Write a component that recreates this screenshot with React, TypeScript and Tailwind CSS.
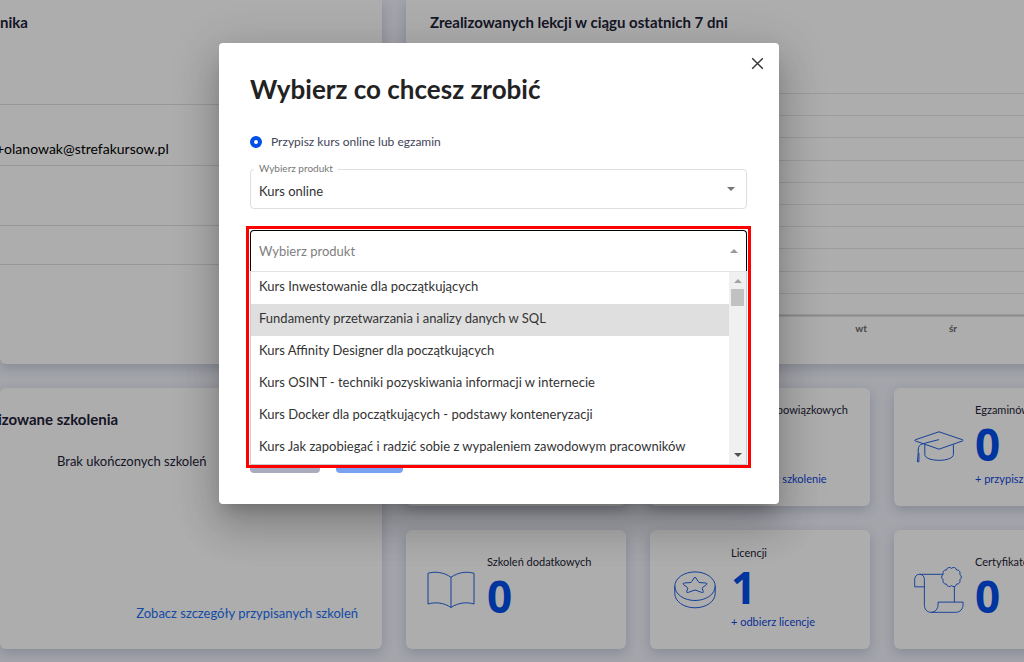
import { useState } from "react";
import type { ReactNode } from "react";

const courses = [
  "Kurs Inwestowanie dla początkujących",
  "Fundamenty przetwarzania i analizy danych w SQL",
  "Kurs Affinity Designer dla początkujących",
  "Kurs OSINT - techniki pozyskiwania informacji w internecie",
  "Kurs Docker dla początkujących - podstawy konteneryzacji",
  "Kurs Jak zapobiegać i radzić sobie z wypaleniem zawodowym pracowników",
];

const weekDays = ["pt", "sb", "nd", "pn", "wt", "śr", "cz"];

// outline of the certificate seal, ten small bumps on a circle
const sealPath =
  Array.from({ length: 11 }, (_, i) => {
    const angle = (i * Math.PI) / 5 - Math.PI / 10;
    const x = (39 + 9 * Math.cos(angle)).toFixed(2);
    const y = (10.5 + 9 * Math.sin(angle)).toFixed(2);
    return i === 0 ? `M${x} ${y}` : `A3.1 3.1 0 0 1 ${x} ${y}`;
  }).join(" ") + "Z";

function BookIcon() {
  return (
    <svg width="48" height="38" viewBox="0 0 48 38" fill="none" stroke="#1f5fe0" strokeLinejoin="round">
      <path d="M1 2.3C8 .2 17 1.2 24 6.3 31 1.2 40 .2 47 2.3V33C40 30.8 31 31.6 24 36.5 17 31.6 8 30.8 1 33Z" />
      <path d="M24 6.3V36.5" />
    </svg>
  );
}

function CoinIcon() {
  return (
    <svg width="42" height="38" viewBox="0 0 42 38" fill="none" stroke="#1f5fe0" strokeLinejoin="round">
      <ellipse cx="21" cy="15.2" rx="20.2" ry="14.3" />
      <path d="M.8 15.2V22.5C.8 30.4 9.8 36.8 21 36.8S41.2 30.4 41.2 22.5V15.2" />
      <path d="M20 7Q21 5.4 22 7L24.2 10.6Q24.8 11.5 26 11.6L31.6 12Q34 12.3 32.3 13.8L28.7 16.4Q27.9 17 28.3 18L29.3 20.3Q29.7 22 27.7 21.4L22 19.3Q21 18.9 20 19.3L14.3 21.4Q12.3 22 12.7 20.3L13.7 18Q14.1 17 13.3 16.4L9.7 13.8Q8 12.3 10.4 12L16 11.6Q17.2 11.5 17.8 10.6Z" />
    </svg>
  );
}

function CapIcon() {
  return (
    <svg width="50" height="32" viewBox="0 0 50 32" fill="none" stroke="#1f5fe0" strokeLinejoin="round">
      <path d="M25 .8 48.6 8.8Q49.8 9.3 48.6 9.9L25 18.2 1.2 9.9Q.2 9.3 1.2 8.8Z" />
      <path d="M10.8 13.5V23.5C10.8 27 17 29.3 25 29.3S39.4 27 39.4 23.5V13.5" />
      <path d="M25 8.6 9 12.7C5.5 13.6 4.2 15.5 4.2 19V22L3.4 30.8H4.9V22" />
    </svg>
  );
}

function CertificateIcon() {
  return (
    <svg width="52" height="48" viewBox="0 0 52 48" fill="none" stroke="#1f5fe0" strokeLinejoin="round">
      <path d="M30 7.7H5.7C2.6 7.7.7 10 .7 13V20.7H10.8" />
      <path d="M5.7 7.7C9 7.7 10.8 10 10.8 13V39.5C10.8 44 13.5 47.2 17.8 47.2H43.5C48 47.2 51 43.5 51 39.5V36.6H25V39.5C25 43.8 22 47.2 17.8 47.2" />
      <path d="M42 20V36.6" />
      <path d={sealPath} />
    </svg>
  );
}

type StatProps = { label: string; value: number; link?: string; icon?: ReactNode };

const stats: StatProps[] = [
  { label: "Szkoleń", value: 0, icon: <BookIcon /> },
  { label: "Szkoleń obowiązkowych", value: 0, link: "+ przypisz szkolenie", icon: <BookIcon /> },
  { label: "Egzaminów", value: 0, link: "+ przypisz egzamin", icon: <CapIcon /> },
  { label: "Szkoleń dodatkowych", value: 0, icon: <BookIcon /> },
  { label: "Licencji", value: 1, link: "+ odbierz licencje", icon: <CoinIcon /> },
  { label: "Certyfikatów", value: 0, icon: <CertificateIcon /> },
];

function StatCard({ label, value, link, icon }: StatProps) {
  return (
    <article className="flex items-center gap-[11px] rounded-md bg-white pl-5 shadow-[0_4px_12px_rgba(40,50,90,0.2)] whitespace-nowrap">
      <div className="flex w-[50px] shrink-0 justify-center">{icon}</div>
      <div className={link ? "pb-1" : "pb-2.5"}>
        <p className="text-[11px] leading-[22px] text-[#1e2337]">{label}</p>
        <p className="font-['Open_Sans',sans-serif] text-[44px] leading-[46px] font-bold text-[#004eeb]">{value}</p>
        {link && (
          <a href="#" className="block text-[11px] leading-6 text-[#0f46e0]">
            {link}
          </a>
        )}
      </div>
    </article>
  );
}

function LessonsChart() {
  return (
    <section className="flex flex-col rounded-b-md bg-white shadow-[0_4px_12px_rgba(40,50,90,0.2)]">
      <h2 className="px-6 pt-3 text-[15px] leading-5 font-bold text-[#1e2337]">
        Zrealizowanych lekcji w ciągu ostatnich 7 dni
      </h2>
      <svg className="mt-[61px] ml-[41px] w-full" height="224">
        {Array.from({ length: 11 }, (_, i) => (
          <line
            key={i}
            x1="0"
            x2="100%"
            y1={Math.round(i * 22.2) + 0.5}
            y2={Math.round(i * 22.2) + 0.5}
            stroke={i === 10 ? "#cccccc" : "#e6e6e6"}
            strokeWidth={i === 10 ? 2 : 1}
          />
        ))}
      </svg>
      <div className="flex pt-[3px] pl-[41px]">
        {weekDays.map((day) => (
          <span key={day} className="w-[92px] text-center text-[10px] leading-4 font-bold text-[#6b6b6b]">
            {day}
          </span>
        ))}
      </div>
    </section>
  );
}

function Dashboard() {
  return (
    <main className="grid min-h-screen grid-cols-[382px_minmax(708px,1fr)] grid-rows-[364px_261px] gap-6 bg-[#f1f3fc]">
      <section className="rounded-b-md bg-white shadow-[0_4px_12px_rgba(40,50,90,0.2)]">
        <h2 className="h-[104px] pt-3 text-[15px] leading-5 font-bold text-[#1e2337]">nika</h2>
        <p className="-ml-1 h-[61px] border-t border-[#e0e1e4] pt-[34px] text-sm leading-5 text-black">
          +olanowak@strefakursow.pl
        </p>
        <div className="h-15 border-t border-[#e0e1e4]" />
        <div className="h-10 border-y border-[#e0e1e4]" />
      </section>

      <LessonsChart />

      <section className="flex flex-col rounded-md bg-white pt-[21px] shadow-[0_4px_12px_rgba(40,50,90,0.2)]">
        <h2 className="-ml-0.5 text-[15px] leading-5 font-bold text-[#1e2337]">izowane szkolenia</h2>
        <p className="mt-[22px] pl-[57px] text-[13px] leading-5 text-[#1e2337]">Brak ukończonych szkoleń</p>
        <a href="#" className="mt-auto self-end pr-6 pb-[26px] text-[13px] leading-5 text-[#1a6ff5]">
          Zobacz szczegóły przypisanych szkoleń
        </a>
      </section>

      <div className="grid grid-cols-3 grid-rows-[118px_119px] gap-6">
        {stats.map((stat) => (
          <StatCard key={stat.label} {...stat} />
        ))}
      </div>
    </main>
  );
}

function CourseCombobox() {
  const [query, setQuery] = useState("");
  const [active, setActive] = useState(1);

  return (
    <div className="relative mt-[21px]">
      <div className="flex h-[41px] items-center rounded-t-sm border border-b-0 border-black px-2">
        <input
          role="combobox"
          aria-label="Wybierz produkt"
          aria-expanded="true"
          aria-controls="course-list"
          placeholder="Wybierz produkt"
          value={query}
          onChange={(e) => setQuery(e.target.value)}
          className="min-w-0 flex-1 text-[13px] leading-5 text-[#333] outline-none placeholder:text-[#808080]"
        />
        <svg width="8" height="4" viewBox="0 0 8 4" fill="#999">
          <path d="M4 0 8 4H0Z" />
        </svg>
      </div>
      <div className="absolute inset-x-0 top-full z-10 flex border border-[#ccc] border-t-[#e3e3e3] bg-white">
        <ul id="course-list" role="listbox" aria-label="Kursy" className="min-w-0 flex-1">
          {courses.map((course, i) => (
            <li
              key={course}
              role="option"
              aria-selected={i === active}
              onMouseEnter={() => setActive(i)}
              className={`h-8 cursor-pointer truncate px-2 text-[13px] leading-7 text-[#333] ${
                i === active ? "bg-[#dfdfdf]" : "bg-white"
              }`}
            >
              {course}
            </li>
          ))}
        </ul>
        <div className="flex w-[17px] flex-col items-center bg-[#f0f0f0]">
          <svg width="8" height="4" viewBox="0 0 8 4" className="mt-[7px] shrink-0" fill="#a3a3a3">
            <path d="M4 0 8 4H0Z" />
          </svg>
          <div className="mt-[6px] h-[17px] w-[13px] bg-[#c1c1c1]" />
          <svg width="8" height="4" viewBox="0 0 8 4" className="mt-auto mb-[7px] shrink-0" fill="#505050">
            <path d="M0 0H8L4 4Z" />
          </svg>
        </div>
      </div>
      {/* highlight frame around the field and its list */}
      <div className="pointer-events-none absolute -inset-x-1 -top-1 z-20 h-[242px] border-3 border-[#ff0000]" />
    </div>
  );
}

function AssignDialog() {
  return (
    <div
      role="dialog"
      aria-labelledby="dialog-title"
      className="relative h-fit w-full max-w-[560px] rounded-sm bg-white pt-[30px] pr-8 pb-[31px] pl-[31px] shadow-[0_11px_15px_-7px_rgba(0,0,0,0.2),0_24px_38px_3px_rgba(0,0,0,0.14),0_9px_46px_8px_rgba(0,0,0,0.12)]"
    >
      <button type="button" aria-label="Zamknij" className="absolute top-[14px] right-[15px]">
        <svg width="13" height="13" viewBox="0 0 13 13" fill="none" stroke="#333" strokeWidth="1.4">
          <path d="M1.2 1.2 11.8 11.8M11.8 1.2 1.2 11.8" />
        </svg>
      </button>
      <h1 id="dialog-title" className="text-[26px] leading-8 font-bold text-[#222]">
        Wybierz co chcesz zrobić
      </h1>
      <label className="mt-[27px] flex items-center gap-[9px] text-xs leading-5 text-[#3f4557]">
        <input
          type="radio"
          name="action"
          defaultChecked
          className="size-3 appearance-none rounded-full border-4 border-[#0050e6] bg-white"
        />
        Przypisz kurs online lub egzamin
      </label>
      <div className="relative mt-[17px]">
        <label htmlFor="product" className="absolute -top-[9px] left-1 bg-white px-[5px] text-[10px] leading-4 text-[#777]">
          Wybierz produkt
        </label>
        <select
          id="product"
          className="h-10 w-full appearance-none rounded-sm border border-[#dedede] bg-white px-2 pt-1.5 text-[13px] text-[#333]"
        >
          <option>Kurs online</option>
          <option>Egzamin</option>
        </select>
        <svg
          width="8"
          height="4"
          viewBox="0 0 8 4"
          className="pointer-events-none absolute top-[18px] right-3"
          fill="#777"
        >
          <path d="M0 0H8L4 4Z" />
        </svg>
      </div>
      <CourseCombobox />
      <div className="mt-[166px] flex gap-4">
        <button type="button" aria-label="Anuluj" className="h-9 w-[70px] rounded-sm bg-[#a9abbf]" />
        <button type="button" aria-label="Przypisz" className="h-9 w-[67px] rounded-sm bg-[#78a1f2]" />
      </div>
    </div>
  );
}

export default function App() {
  return (
    <div className="relative h-screen overflow-hidden font-['Lato','Open_Sans',sans-serif]">
      <Dashboard />
      <div className="absolute inset-0 flex justify-center bg-black/32 pt-[43px] pr-[26px]">
        <AssignDialog />
      </div>
    </div>
  );
}
